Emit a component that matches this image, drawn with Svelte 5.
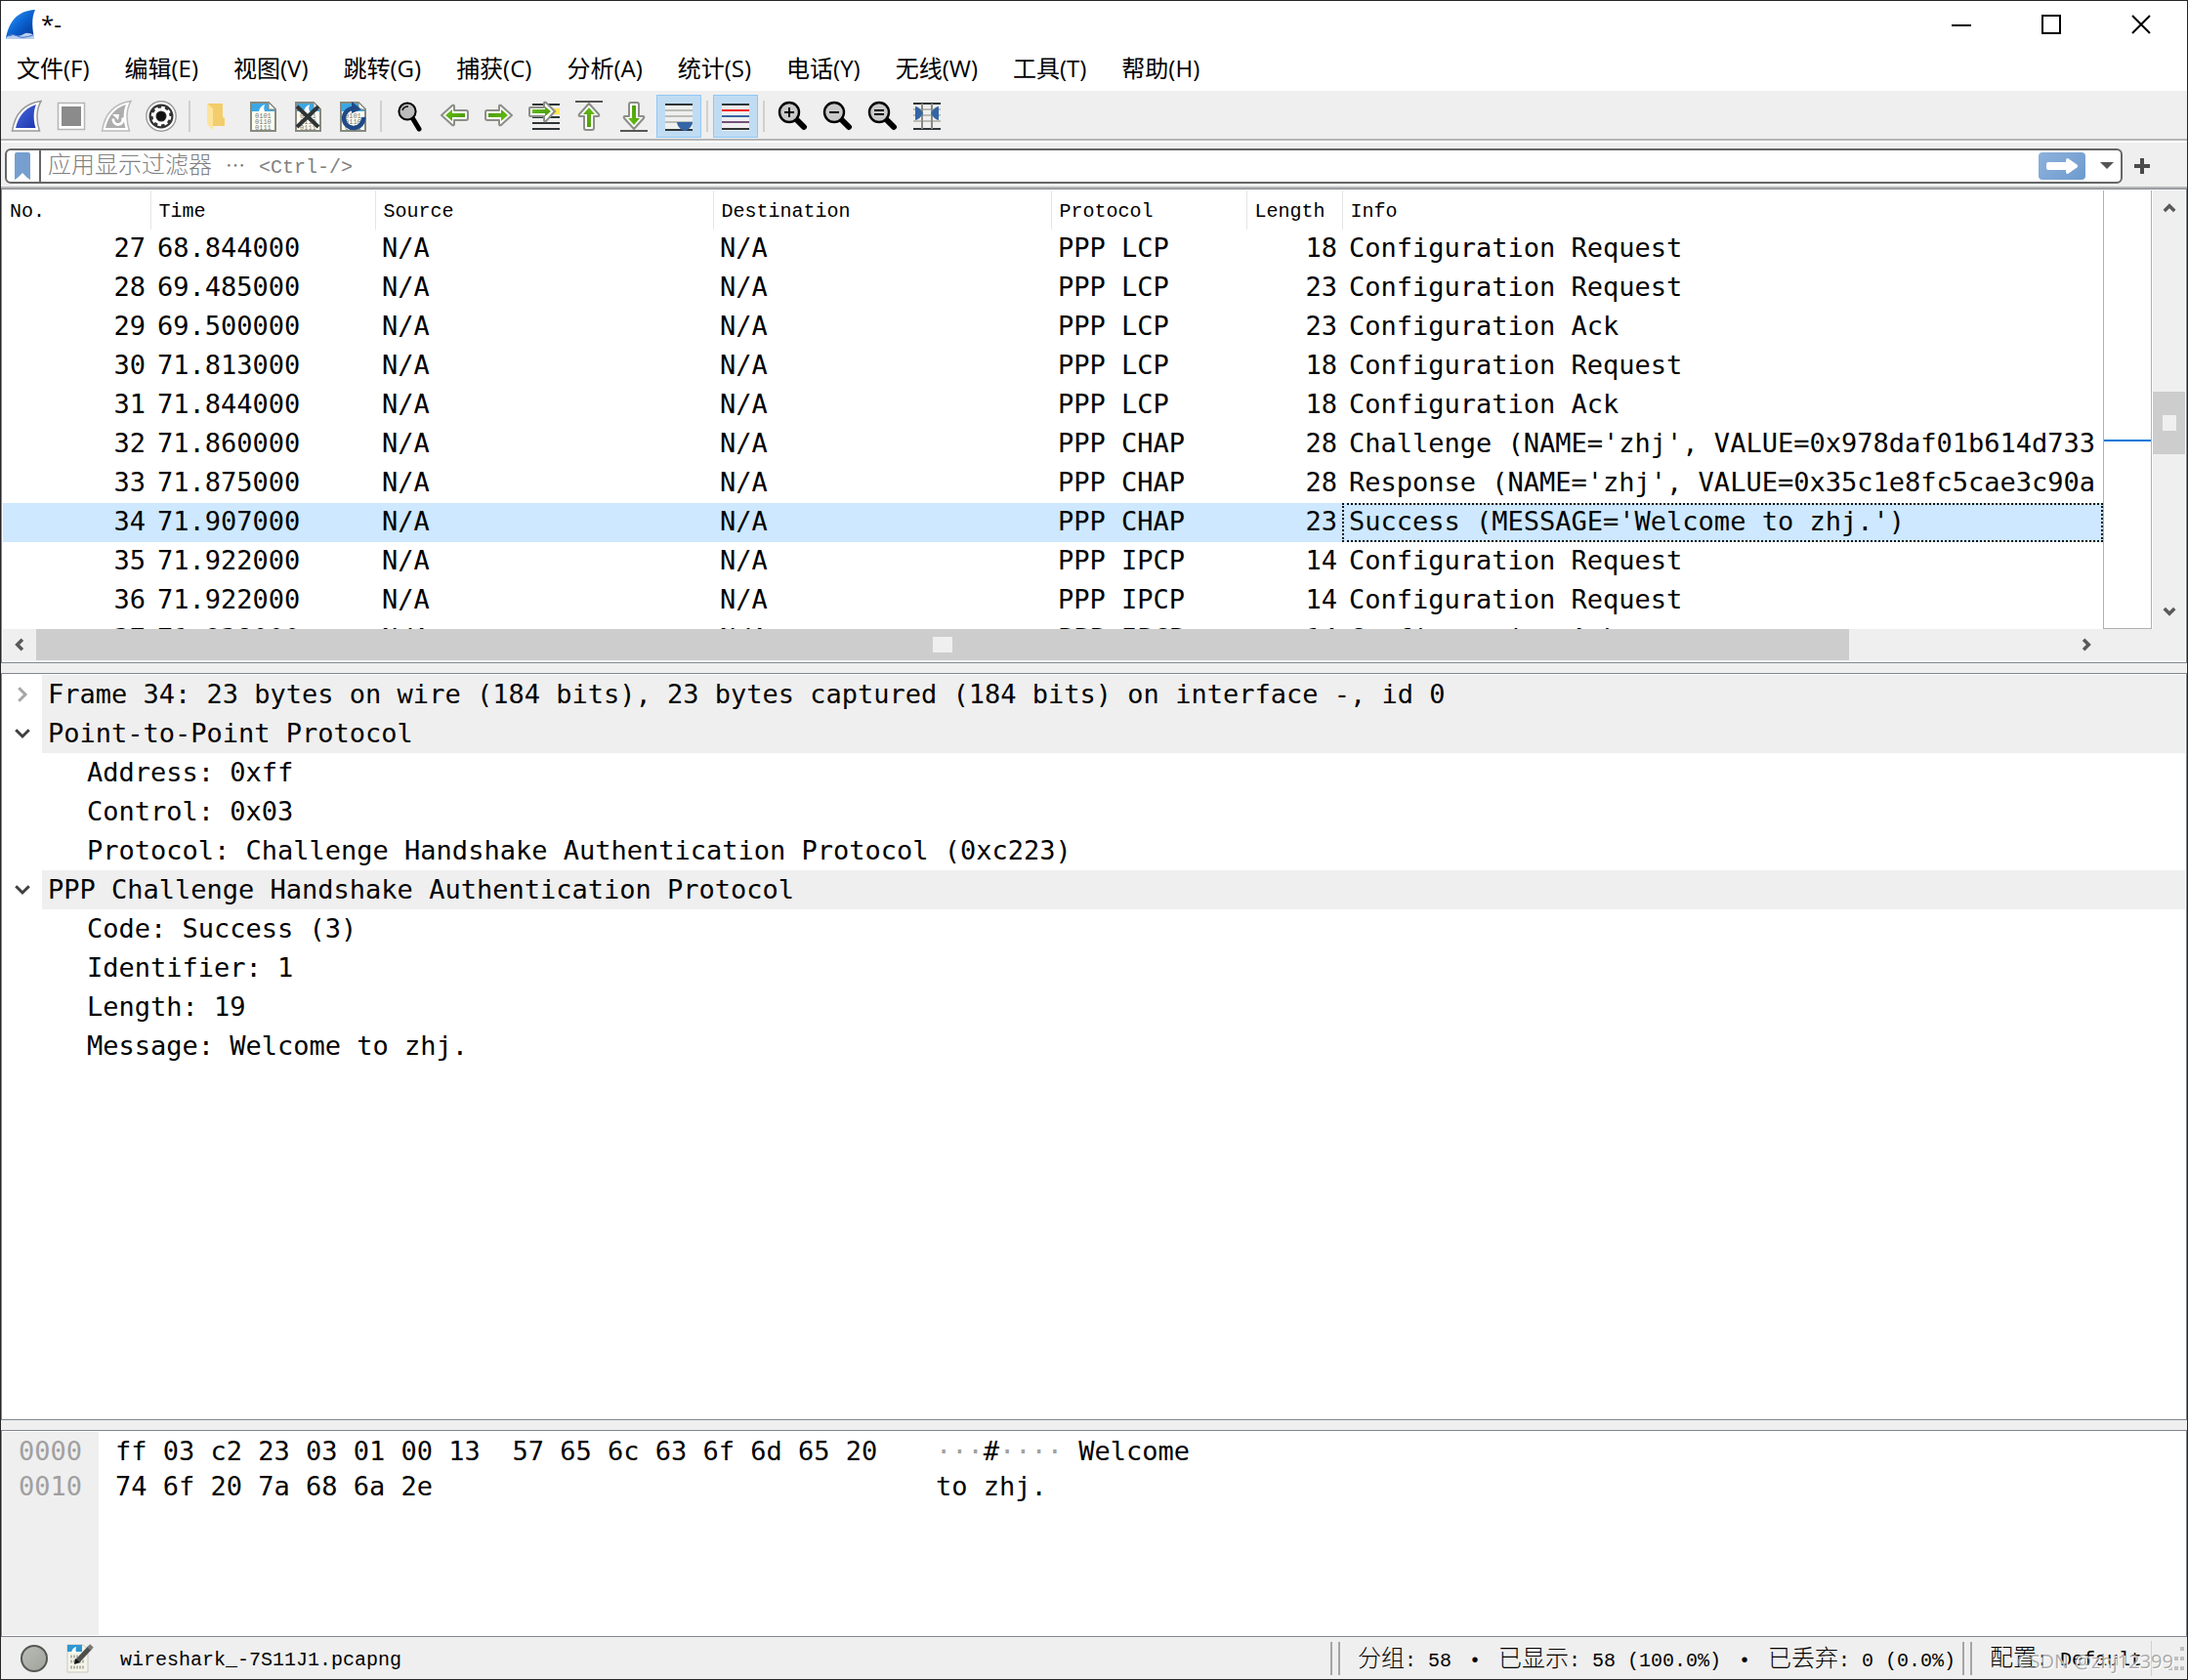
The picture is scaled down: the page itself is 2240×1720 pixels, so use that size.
<script>
  const menus = ['文件(F)', '编辑(E)', '视图(V)', '跳转(G)', '捕获(C)', '分析(A)', '统计(S)', '电话(Y)', '无线(W)', '工具(T)', '帮助(H)'];

  const toolGroups = [
    [['start', '开始捕获'], ['stop', '停止捕获'], ['restart', '重新开始捕获'], ['options', '捕获选项']],
    [['open', '打开'], ['save', '保存'], ['close', '关闭'], ['reload', '重新加载']],
    [['find', '查找分组'], ['back', '后退'], ['forward', '前进'], ['goto', '转到分组'], ['first', '首个分组'], ['last', '末个分组'], ['autoscroll', '自动滚动', true]],
    [['colorize', '分组着色', true]],
    [['zoomin', '放大'], ['zoomout', '缩小'], ['zoomreset', '原始大小'], ['columns', '调整列宽']]
  ];

  const columns = ['No.', 'Time', 'Source', 'Destination', 'Protocol', 'Length', 'Info'];
  const packets = [
    [27, '68.844000', 'LCP', 18, 'Configuration Request'],
    [28, '69.485000', 'LCP', 23, 'Configuration Request'],
    [29, '69.500000', 'LCP', 23, 'Configuration Ack'],
    [30, '71.813000', 'LCP', 18, 'Configuration Request'],
    [31, '71.844000', 'LCP', 18, 'Configuration Ack'],
    [32, '71.860000', 'CHAP', 28, "Challenge (NAME='zhj', VALUE=0x978daf01b614d733"],
    [33, '71.875000', 'CHAP', 28, "Response (NAME='zhj', VALUE=0x35c1e8fc5cae3c90a"],
    [34, '71.907000', 'CHAP', 23, "Success (MESSAGE='Welcome to zhj.')"],
    [35, '71.922000', 'IPCP', 14, 'Configuration Request'],
    [36, '71.922000', 'IPCP', 14, 'Configuration Request'],
    [37, '71.938000', 'IPCP', 14, 'Configuration Ack']
  ];
  let selected = $state(34);
  let filter = $state('');

  let tree = $state([
    { title: 'Frame 34: 23 bytes on wire (184 bits), 23 bytes captured (184 bits) on interface -, id 0', open: false, fields: [] },
    {
      title: 'Point-to-Point Protocol',
      open: true,
      fields: ['Address: 0xff', 'Control: 0x03', 'Protocol: Challenge Handshake Authentication Protocol (0xc223)']
    },
    {
      title: 'PPP Challenge Handshake Authentication Protocol',
      open: true,
      fields: ['Code: Success (3)', 'Identifier: 1', 'Length: 19', 'Message: Welcome to zhj.']
    }
  ]);

  const bytes = [
    { offset: '0000', hex: 'ff 03 c2 23 03 01 00 13  57 65 6c 63 6f 6d 65 20', ascii: '···#···· Welcome' },
    { offset: '0010', hex: '74 6f 20 7a 68 6a 2e', ascii: 'to zhj.' }
  ];

  const hanRuns = (text) => text.split(/([\u4e00-\u9fff]+|[…•])/).filter(Boolean);
  const isHan = (run) => /[\u4e00-\u9fff]/.test(run);
  const isDot = (run) => /[…•]/.test(run);
</script>

{#snippet mixed(text)}{#each hanRuns(text) as run}{#if isHan(run)}<span class="han">{run}</span>{:else if isDot(run)}<span class="wide">{run === '…' ? '⋯' : run}</span>{:else}{run}{/if}{/each}{/snippet}

{#snippet page()}
  <path d="M5 3h17l7 7v21H5z" fill="#fdfdf0" />
  <path d="M5 3h17l7 7v2H5z" fill="#3ba8e6" />
  <path d="M12 12c1-4 3-6 6-7-1 3-1 5 0 7z" fill="#fff" />
  <g class="bits"><text x="8" y="19">0101</text><text x="8" y="25">0110</text><text x="8" y="31">0111</text></g>
  <path d="M4 3h18l7 7v22H4z" fill="none" stroke="#868a80" stroke-width="2" />
  <path d="M22 3v7h7z" fill="#f4f4f0" stroke="#868a80" stroke-width="1" />
{/snippet}

{#snippet lens()}
  <path d="M20 20l8 8" stroke="#000" stroke-width="6" stroke-linecap="round" />
  <circle cx="13" cy="13" r="10" fill="#c9c9c9" stroke="#000" stroke-width="2.4" />
{/snippet}

{#snippet arrow()}
  <path d="M3 16L14 6q2-1 2 1v4h12q2 0 2 2v6q0 2-2 2H16v4q0 2-2 1z" fill="#fff" stroke="#8b8e86" stroke-width="2" stroke-linejoin="round" />
  <path d="M7 16l7-6v4h13v4H14v4z" fill="url(#leaf)" />
{/snippet}

{#snippet icon(name)}
  <svg class="icon" viewBox="0 0 32 34" aria-hidden="true">
    {#if name === 'start'}
      <path d="M1.500 32C4 16 13 4 31 1.500C26 10 26 22 29.500 32z" fill="#fff" stroke="#999" stroke-width="1.500" />
      <path d="M5 29C8 17 14 9 26 5C23 12 23 21 25.500 29z" fill="url(#fin)" />
    {:else if name === 'stop'}
      <rect x="2.500" y="3.500" width="27" height="27" fill="#fff" stroke="#b5b5b5" stroke-width="1.500" />
      <rect x="6" y="7" width="20" height="20" fill="#8b8b8b" />
    {:else if name === 'restart'}
      <path d="M1.500 32C4 16 13 4 31 1.500C26 10 26 22 29.500 32z" fill="#fff" stroke="#bbb" stroke-width="1.500" />
      <path d="M5 29C8 17 14 9 26 5C23 12 23 21 25.500 29z" fill="#adadad" />
      <path d="M22.500 18.500a5 5 0 1 1-9.500 1" fill="none" stroke="#fff" stroke-width="2.800" />
      <path d="M12 15h7l-1 6z" fill="#fff" />
    {:else if name === 'options'}
      <circle cx="16" cy="17" r="15.200" fill="#fff" stroke="#999" stroke-width="1.400" />
      <circle cx="16" cy="17" r="12.500" fill="#333" />
      <circle cx="16" cy="17" r="7" fill="none" stroke="#fff" stroke-width="3" />
      <circle cx="16" cy="17" r="9" fill="none" stroke="#fff" stroke-width="2.600" stroke-dasharray="3.530 3.530" />
      <circle cx="16" cy="17" r="4.600" fill="#111" />
    {:else if name === 'open'}
      <path d="M6 4h15v14l2 1v8H9z" fill="#f3cd6b" />
      <path d="M5 4l6 5v22l-6-6z" fill="#fde39b" />
    {:else if name === 'save'}
      {@render page()}
    {:else if name === 'close'}
      {@render page()}
      <path d="M5 7l22 21M27 7L5 28" stroke="#2e3436" stroke-width="4" />
    {:else if name === 'reload'}
      {@render page()}
      <path d="M27 18a10 10 0 1 1-11-9" fill="none" stroke="#204a87" stroke-width="4.500" />
      <path d="M15 2l10 8-10 4z" fill="#204a87" />
    {:else if name === 'find'}
      <path d="M20 20l6 10" stroke="#000" stroke-width="5" stroke-linecap="round" />
      <circle cx="14" cy="12" r="8.600" fill="#bcbcbc" stroke="#000" stroke-width="2" />
      <path d="M9 11q1-4 6-4" fill="none" stroke="#111" stroke-width="1.600" />
    {:else if name === 'back'}
      {@render arrow()}
    {:else if name === 'forward'}
      <g transform="rotate(180 16 16)">{@render arrow()}</g>
    {:else if name === 'goto'}
      <path d="M4 5h28M4 18h28M4 24h28M4 30h28" stroke="#2e3436" stroke-width="2" />
      <path d="M18 9h14v6H18z" fill="#fce94f" />
      <path d="M27 12l-9-9q-2-1-2 1v4H2q-1 0-1 1v7q0 1 1 1h14v4q0 2 2 1z" fill="#fff" stroke="#8b8e86" stroke-width="2" />
      <path d="M23 12l-6-5v3H4v4h13v3z" fill="url(#leaf)" />
    {:else if name === 'first'}
      <path d="M2 2h28" stroke="#555753" stroke-width="2" />
      <g transform="translate(0 1) rotate(90 16 16)">{@render arrow()}</g>
    {:else if name === 'last'}
      <path d="M2 32h28" stroke="#555753" stroke-width="2" />
      <g transform="translate(0 1) rotate(270 16 16)">{@render arrow()}</g>
    {:else if name === 'autoscroll'}
      <path d="M2 4h28v28H2z" fill="#efefef" />
      <path d="M2 11h28M2 17h28M2 23h28" stroke="#babdb6" stroke-width="2" />
      <path d="M2 5h28M2 31h28" stroke="#2e3436" stroke-width="2" />
      <path d="M14 23h16q0 4-5 8l-3 1-3-1q-5-4-5-8z" fill="#3465a4" />
    {:else if name === 'colorize'}
      <path d="M2 4h28v28H2z" fill="#efefef" />
      <path d="M2 5h28M2 30h28" stroke="#2e3436" stroke-width="2" />
      <path d="M2 11h28" stroke="#ef2929" stroke-width="2" />
      <path d="M2 17h28" stroke="#3465a4" stroke-width="2" />
      <path d="M2 23h28" stroke="#75507b" stroke-width="2" />
    {:else if name === 'zoomin'}
      {@render lens()}
      <path d="M8 13h10M13 8v10" stroke="#000" stroke-width="2" />
    {:else if name === 'zoomout'}
      {@render lens()}
      <path d="M8 13h10" stroke="#000" stroke-width="2" />
    {:else if name === 'zoomreset'}
      {@render lens()}
      <path d="M8 11h10M8 15h10" stroke="#000" stroke-width="2" />
    {:else}
      <path d="M2 10h28M2 16h28M2 22h28" stroke="#babdb6" stroke-width="2" />
      <path d="M2 4h28M2 30h28" stroke="#2e3436" stroke-width="2" />
      <path d="M11 4v26M21 4v26" stroke="#888a85" stroke-width="2" />
      <path d="M4 7q4 0 8 7-4 7-8 7zM28 7q-4 0-8 7 4 7 8 7z" fill="#3465a4" />
    {/if}
  </svg>
{/snippet}

{#snippet chevron(dir)}
  <svg class="chevron {dir}" viewBox="0 0 12 12" aria-hidden="true"><path d="M1.500 8.500L6 4l4.500 4.500" /></svg>
{/snippet}

<div class="window">
  <svg class="defs" aria-hidden="true">
    <defs>
      <linearGradient id="fin" x1="0" y1="0" x2="1" y2="1"><stop offset="0" stop-color="#4a6ae0" /><stop offset="1" stop-color="#1c35ad" /></linearGradient>
      <linearGradient id="logo-fin" x1="0" y1="0" x2="1" y2="1"><stop offset="0" stop-color="#3aa0f5" /><stop offset="0.500" stop-color="#0a63d2" /><stop offset="1" stop-color="#042f8d" /></linearGradient>
      <linearGradient id="leaf" x1="0" y1="0" x2="1" y2="1"><stop offset="0" stop-color="#6ac516" /><stop offset="1" stop-color="#46920a" /></linearGradient>
    </defs>
  </svg>

  <header class="titlebar">
    <svg class="logo" viewBox="0 0 32 32" aria-hidden="true">
      <path d="M1 30C4 15 11 2 31 1C27 9 28 20 30 30z" fill="url(#logo-fin)" />
      <path d="M1 30q4-5 9-3t9-1 11 1v4H1z" fill="#b9cdf0" />
      <path d="M4 28q5-3 9 0t16-1" stroke="#4272c4" fill="none" />
    </svg>
    <h1>*-</h1>
    <div class="controls">
      <button aria-label="最小化"><svg viewBox="0 0 20 20"><path d="M0 11h20" /></svg></button>
      <button aria-label="最大化"><svg viewBox="0 0 20 20"><path d="M1 1h18v18H1z" /></svg></button>
      <button aria-label="关闭"><svg viewBox="0 0 20 20"><path d="M1 1l18 18M19 1L1 19" /></svg></button>
    </div>
  </header>

  <nav class="menubar">
    {#each menus as menu}<button>{menu}</button>{/each}
  </nav>

  <div class="toolbar" role="toolbar">
    {#each toolGroups as group, g}
      {#if g > 0}<span class="sep"></span>{/if}
      {#each group as [name, label, on]}
        <button class="tool" class:on aria-label={label}>{@render icon(name)}</button>
      {/each}
    {/each}
  </div>

  <div class="filterbar">
    <div class="filter">
      <button class="bookmark" aria-label="书签"><svg viewBox="0 0 16 28"><path d="M0 2q0-2 2-2h12q2 0 2 2v26l-3-2-5-5-5 5-3 2z" fill="#769fcf" /></svg></button>
      <div class="field">
        <input id="display-filter" bind:value={filter} />
        <label for="display-filter" class:gone={filter}>{@render mixed('应用显示过滤器 … <Ctrl-/>')}</label>
      </div>
      <button class="apply" aria-label="应用"><svg viewBox="0 0 48 28"><path d="M10 10h18V8q0-2 2-2l10 7v2l-10 7q-2 0-2-2v-2H10q-2 0-2-2v-4q0-2 2-2z" fill="#fff" /></svg></button>
      <button class="history" aria-label="历史"><svg viewBox="0 0 14 8"><path d="M0 0h14L7 7z" fill="#555" /></svg></button>
    </div>
    <button class="add" aria-label="添加"><svg viewBox="0 0 16 16"><path d="M8 0v16M0 8h16" stroke="#4a4a4a" stroke-width="4" /></svg></button>
  </div>

  <main class="panes">
    <section class="pane packets">
      <div class="list">
        <table>
          <colgroup><col class="c-no" /><col class="c-time" /><col class="c-addr" /><col class="c-addr" /><col class="c-proto" /><col class="c-len" /><col /></colgroup>
          <thead><tr>{#each columns as c}<th scope="col">{c}</th>{/each}</tr></thead>
          <tbody>
            {#each packets as [no, time, proto, len, info]}
              <tr class:selected={selected === no} onclick={() => (selected = no)}>
                <td class="num">{no}</td><td>{time}</td><td>N/A</td><td>N/A</td><td>PPP {proto}</td><td class="num">{len}</td><td class="info">{info}</td>
              </tr>
            {/each}
          </tbody>
        </table>
      </div>
      <div class="minimap"><span class="before"></span><span class="mark"></span><span class="after"></span></div>
      <div class="vscroll">
        <button aria-label="向上滚动">{@render chevron('up')}</button>
        <span class="before"></span><span class="thumb"><i></i></span><span class="after"></span>
        <button aria-label="向下滚动">{@render chevron('down')}</button>
      </div>
      <div class="hscroll">
        <button aria-label="向左滚动">{@render chevron('left')}</button>
        <span class="thumb"><i></i></span><span class="after"></span>
        <button aria-label="向右滚动">{@render chevron('right')}</button>
      </div>
    </section>

    <section class="pane details">
      {#each tree as node}
        <div class="node">
          <button class="toggle" class:shut={!node.open} aria-label="展开或折叠" aria-expanded={node.open} onclick={() => (node.open = !node.open)}>{@render chevron(node.open ? 'down' : 'right')}</button>
          <span class="title">{node.title}</span>
        </div>
        {#if node.open}
          {#each node.fields as field}<div class="leaf">{field}</div>{/each}
        {/if}
      {/each}
    </section>

    <section class="pane bytes">
      <div class="offsets">{#each bytes as line}<div>{line.offset}</div>{/each}</div>
      <div class="hex">{#each bytes as line}<div>{line.hex}</div>{/each}</div>
      <div class="ascii">
        {#each bytes as line}<div>{#each line.ascii.split(/(·+)/) as part}{#if part.startsWith('·')}<span class="dim">{part}</span>{:else}{part}{/if}{/each}</div>{/each}
      </div>
    </section>
  </main>

  <footer class="status">
    <button class="expert" aria-label="专家信息"></button>
    <button class="comment" aria-label="捕获文件注释">
      <svg viewBox="0 0 28 28">
        <path d="M0 0h16l5 5v23H0z" fill="#f4f4e8" stroke="#c9c9bf" />
        <path d="M0 0h15v7H0z" fill="#2e97d4" />
        <path d="M4 8q1-5 5-6-1 3 0 6z" fill="#fff" />
        <path d="M3 12h14M3 17h14M3 23h14" stroke="#b4b4ac" stroke-width="3" stroke-dasharray="2 1" />
        <path d="M10 17L23 3" stroke="#4c504c" stroke-width="5" />
        <path d="M22 4l3-3" stroke="#777" stroke-width="5" />
        <path d="M7 20l1-6 5 4z" fill="#111" />
      </svg>
    </button>
    <span class="file">wireshark_-7S11J1.pcapng</span>
    <span class="grip"></span>
    <span class="counts">{@render mixed('分组: 58 • 已显示: 58 (100.0%) • 已丢弃: 0 (0.0%)')}</span>
    <span class="grip"></span>
    <span class="profile">{@render mixed('配置: Default')}</span>
    <svg class="resize" viewBox="0 0 16 28" aria-hidden="true"><path d="M12 2h4v4h-4zM12 12h4v4h-4zM6 12h4v4H6zM12 22h4v4h-4zM6 22h4v4H6zM0 22h4v4H0z" fill="#bfbfbf" /></svg>
    <span class="watermark">CSDN @zhj12399</span>
  </footer>
</div>

<style>
  :global(body) { margin: 0; background: #efefef; }
  * { box-sizing: border-box; }
  button { border: 0; background: none; padding: 0; margin: 0; font: inherit; color: inherit; display: flex; align-items: center; justify-content: center; }
  svg { display: block; }
  .window {
    display: flex; flex-direction: column; min-height: 100vh; color: #000; background: #efefef;
    border: 1px solid #26262a; font: 20px/28px "Liberation Mono", "Noto Sans CJK SC", monospace;
  }
  .defs { position: absolute; width: 0; height: 0; }
  .han { font-family: "Noto Sans CJK SC", sans-serif; font-size: 24px; font-weight: 300; line-height: 24px; }
  .wide { display: inline-block; width: 24px; text-align: center; }

  .titlebar { display: flex; align-items: center; height: 47px; background: #fff; padding-left: 4px; }
  .logo { width: 32px; height: 32px; }
  .titlebar h1 { margin: 0 0 0 5px; font: 24px/32px "Open Sans", sans-serif; }
  .controls { display: flex; margin-left: auto; }
  .controls button { width: 92px; height: 46px; padding-right: 2px; }
  .controls svg { width: 20px; height: 20px; fill: none; stroke: #000; stroke-width: 2; }

  .menubar {
    display: flex; gap: 36px; height: 46px; padding: 0 16px 2px; background: #fff; border-bottom: 1px solid #efefef;
    font: 24px/40px "Open Sans", "Noto Sans CJK SC", sans-serif;
  }

  .toolbar { display: flex; align-items: center; height: 50px; padding: 2px 3px 0; border-bottom: 2px solid #b5b5b5; }
  .tool { width: 46px; height: 44px; }
  .tool.on { background: #c0dcf3; border: 1px solid #90c8f6; }
  .icon { width: 32px; height: 34px; }
  .bits { font: 7px "Liberation Mono", monospace; fill: #777; }
  .sep { width: 2px; height: 32px; margin: 0 5px; background: #d0d0d0; }

  .filterbar { display: flex; align-items: center; height: 49px; padding: 4px 38px 2px 4px; border-top: 2px solid #fff; border-bottom: 2px solid #b5b5b5; }
  .filter { flex: 1; display: flex; align-items: center; height: 36px; background: #fff; border: 2px solid #666; border-radius: 6px; overflow: hidden; }
  .bookmark { width: 35px; height: 32px; padding-right: 2px; border-right: 2px solid #666; }
  .bookmark svg { width: 16px; height: 28px; }
  .field { flex: 1; display: grid; }
  .field input, .field label { grid-area: 1 / 1; height: 34px; padding: 2px 0 0 7px; font: 20px/32px "Liberation Mono", "Noto Sans CJK SC", monospace; }
  .field input { border: 0; outline: 0; background: none; min-width: 0; }
  .field label { color: #808080; white-space: pre; cursor: text; }
  .field .gone { visibility: hidden; }
  .apply { width: 48px; height: 28px; border-radius: 4px; background: linear-gradient(135deg, #8fb1dc, #6d9bce); }
  .apply svg { width: 48px; height: 28px; }
  .history { width: 36px; height: 32px; padding-left: 8px; }
  .history svg { width: 14px; height: 8px; }
  .add { margin-left: 12px; width: 16px; height: 16px; }
  .add svg { width: 16px; height: 16px; }

  .panes { flex: 1; display: flex; flex-direction: column; gap: 10px; font: 27px/38px "DejaVu Sans Mono", "Liberation Mono", monospace; }
  .pane { background: #fff; border: 1px solid #828790; padding: 1px; min-height: 0; }
  .packets { flex: 486 1 0; display: grid; grid-template-columns: minmax(0, 1fr) 50px 34px; grid-template-rows: minmax(0, 1fr) 33px; }
  .list { overflow: hidden; min-height: 0; }
  table { width: 100%; table-layout: fixed; border-collapse: collapse; }
  .c-no { width: 151px; }
  .c-time { width: 230px; }
  .c-addr { width: 346px; }
  .c-proto { width: 200px; }
  .c-len { width: 98px; }
  th { height: 40px; padding: 4px 0 0 8px; text-align: left; font: 20px/36px "Liberation Mono", monospace; border-right: 1px solid #e5e5e5; }
  th:first-child { padding-left: 7px; }
  th:last-child { border-right: 0; }
  td { height: 40px; padding: 0 0 2px 7px; white-space: pre; overflow: hidden; }
  .num { text-align: right; padding-right: 5px; }
  .selected td { background: #cde8ff; }
  .selected .info { outline: 2px dotted #111; outline-offset: -2px; }
  .before, .after { display: block; }
  .minimap { display: flex; flex-direction: column; border: solid #b0b0b0; border-width: 0 1px 1px; }
  .minimap .before { flex: 254; }
  .minimap .mark { height: 2px; background: #0078d7; }
  .minimap .after { flex: 191; }
  .vscroll { display: flex; flex-direction: column; background: #efefef; border-left: 1px solid #fff; }
  .vscroll button { height: 36px; }
  .vscroll .before { flex: 169; }
  .vscroll .after { flex: 142; }
  .thumb { display: flex; align-items: center; justify-content: center; background: #cdcdcd; }
  .vscroll .thumb { height: 64px; }
  .thumb i { width: 14px; height: 16px; background: #efefef; }
  .hscroll { grid-column: 1 / -1; display: flex; background: #efefef; padding-right: 84px; border-bottom: 1px solid #f8f8f8; }
  .hscroll button { width: 34px; }
  .hscroll .thumb { flex: 1856; }
  .hscroll .thumb i { width: 20px; }
  .hscroll .after { flex: 226; }
  .chevron { width: 14px; height: 14px; fill: none; stroke: #5a5a5a; stroke-width: 3; }
  .down { transform: rotate(180deg); }
  .left { transform: rotate(-90deg); }
  .right { transform: rotate(90deg); }

  .details { flex: 766 1 0; line-height: 40px; }
  .node { display: flex; height: 40px; }
  .toggle { width: 40px; }
  .toggle .chevron { width: 18px; height: 18px; stroke: #404040; stroke-width: 2; }
  .toggle.shut .chevron { stroke: #a6a6a6; }
  .title { flex: 1; padding-left: 6px; background: #efefef; white-space: pre; }
  .leaf { height: 40px; padding-left: 86px; white-space: pre; }

  .bytes { flex: 210 1 0; display: grid; grid-template-columns: 98px 840px minmax(0, 1fr); line-height: 36px; white-space: pre; }
  .bytes > div { padding-top: 2px; }
  .bytes .offsets { background: #efefef; color: #a0a0a0; padding-left: 16px; }
  .hex { padding-left: 17px; }
  .ascii { padding-left: 17px; }
  .dim { color: #a0a0a0; }

  .status { position: relative; display: flex; align-items: center; height: 43px; padding: 0 3px 0 20px; white-space: pre; }
  .expert { width: 28px; height: 28px; border: 2px solid #555753; border-radius: 50%; background: linear-gradient(135deg, #babdb6, #9fa39b); }
  .comment { margin-left: 20px; width: 28px; height: 28px; }
  .comment svg { width: 28px; height: 28px; overflow: visible; }
  .file { flex: 1; margin-left: 26px; padding-top: 5px; }
  .grip { width: 10px; height: 34px; border: solid #a5a5a5; border-width: 0 2px; }
  .counts { width: 637px; padding: 4px 0 0 18px; }
  .profile { width: 184px; padding: 2px 0 0 18px; height: 36px; line-height: 36px; border-right: 1px solid #d0d0d0; }
  .resize { width: 16px; height: 28px; margin-left: 17px; }
  .watermark { position: absolute; right: 14px; bottom: 4px; font: 20px/28px "Open Sans", sans-serif; color: rgba(150, 150, 150, 0.8); text-shadow: 1px 1px 0 #fff; }
</style>
